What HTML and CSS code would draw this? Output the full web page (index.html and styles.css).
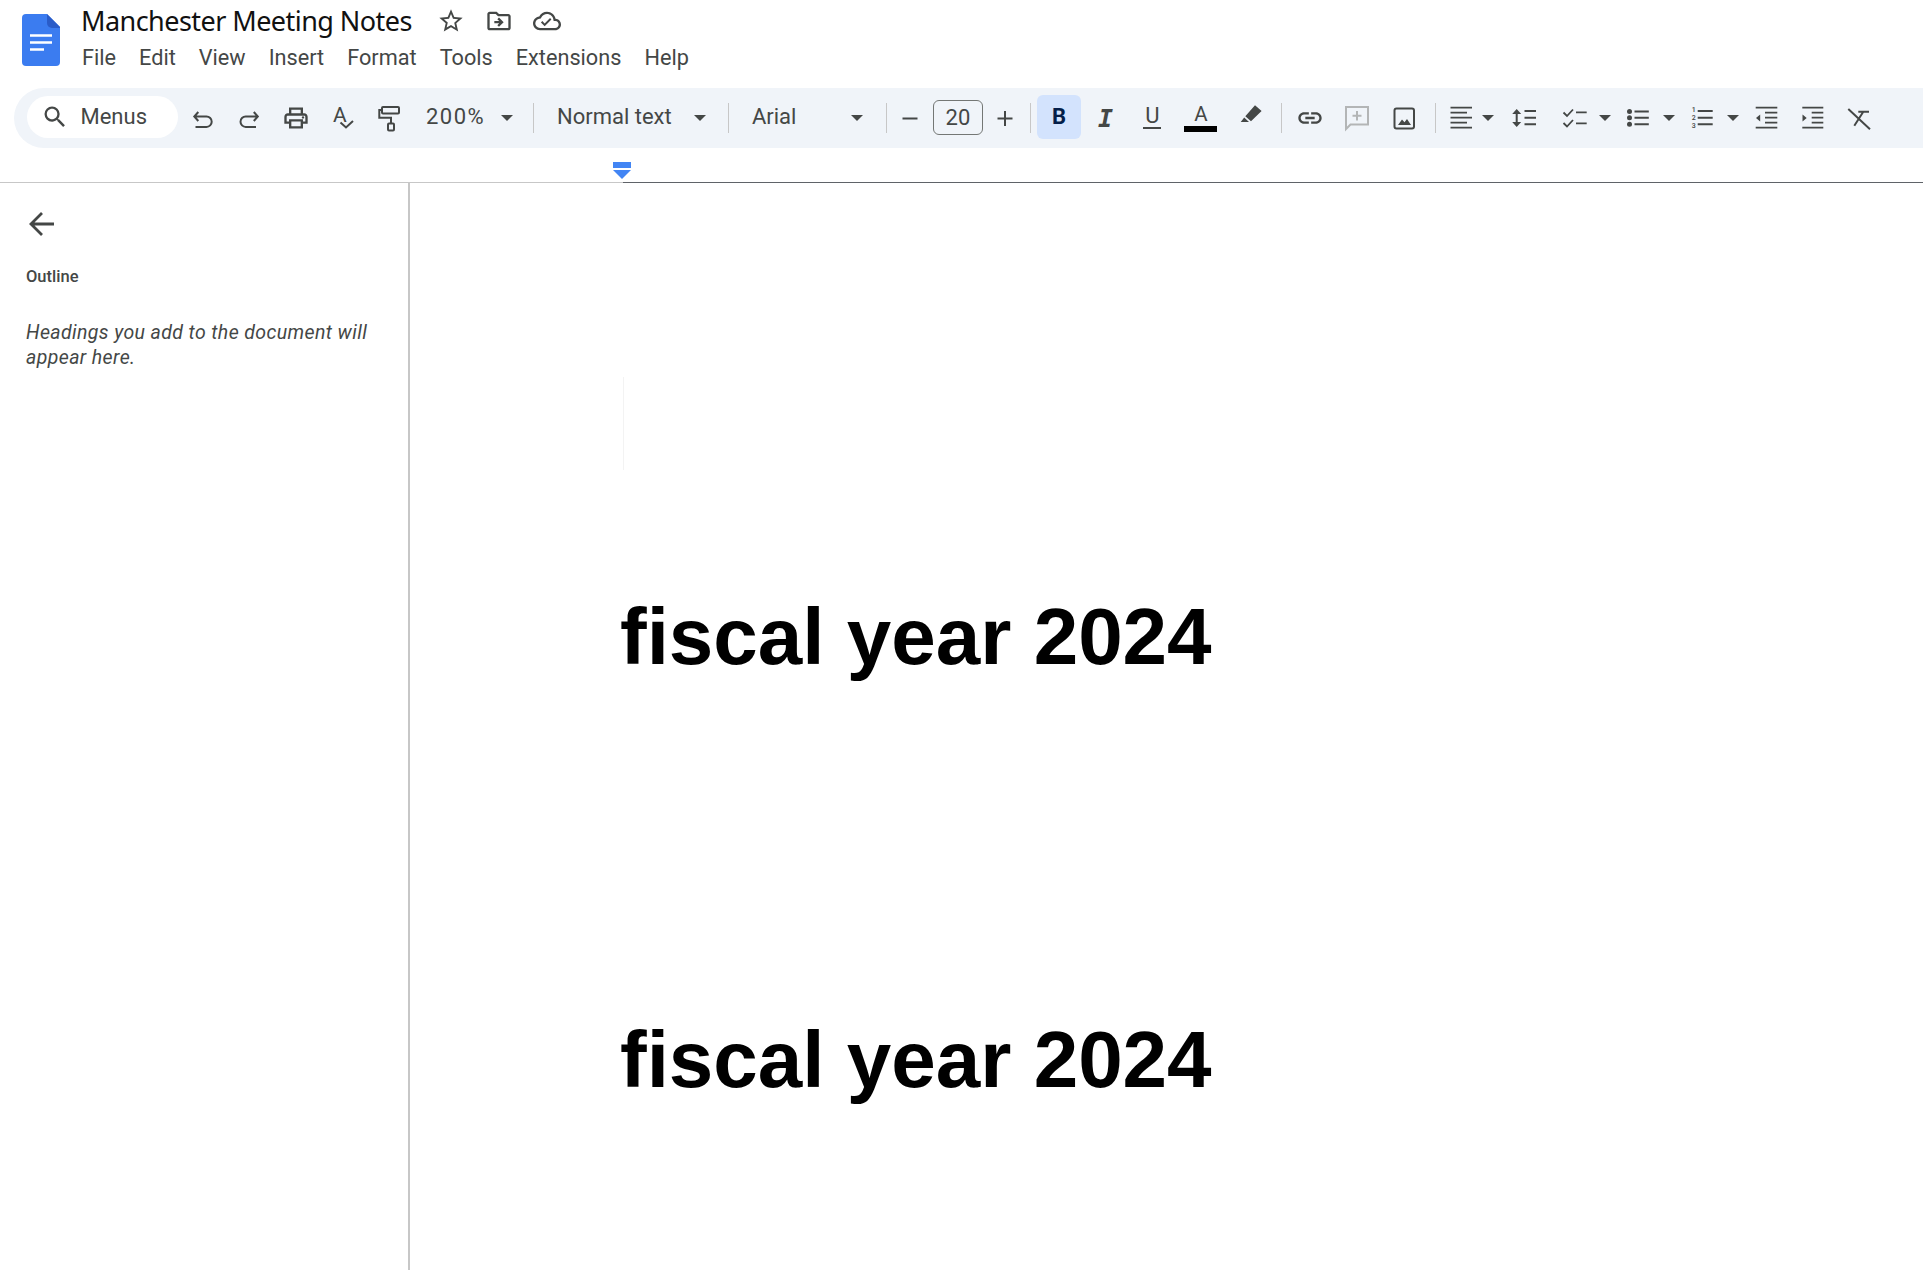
FILE: index.html
```html
<!DOCTYPE html>
<html lang="en">
<head>
<meta charset="utf-8">
<title>Manchester Meeting Notes</title>
<link rel="stylesheet" href="styles.css">
</head>
<body>
<header class="topbar">
  <svg class="logo" viewBox="0 0 38 52"><path class="logo-body" d="M4 0H25L38 13V48a4 4 0 0 1-4 4H4a4 4 0 0 1-4-4V4a4 4 0 0 1 4-4z"/><path class="logo-fold" d="M25 0L38 13V14H30a5 5 0 0 1-5-5z"/><path class="logo-lines" d="M8 21.5H30M8 28.5H30M8 35.5H22"/></svg>
  <div class="titleblock">
    <div class="titlerow">
      <h1 class="doctitle">Manchester Meeting Notes</h1>
      <svg class="icon title-star" viewBox="0 0 24 24"><path d="M22 9.24l-7.19-.62L12 2 9.19 8.63 2 9.24l5.46 4.73L5.82 21 12 17.27 18.18 21l-1.63-7.03L22 9.24zM12 15.4l-3.76 2.27 1-4.28-3.32-2.88 4.38-.38L12 6.1l1.71 4.04 4.38.38-3.32 2.88 1 4.28L12 15.4z"/></svg>
      <svg class="icon title-next" viewBox="0 0 24 24"><path d="M20 6h-8l-2-2H4c-1.1 0-1.99.9-1.99 2L2 18c0 1.1.9 2 2 2h16c1.1 0 2-.9 2-2V8c0-1.1-.9-2-2-2zm0 12H4V6h5.17l2 2H20v10zm-8.01-9l-1.41 1.41L12.16 12H8v2h4.16l-1.59 1.59L11.99 17 16 13.01 11.99 9z"/></svg>
      <svg class="icon title-next" viewBox="0 0 24 24"><path d="M12 6c2.62 0 4.88 1.86 5.39 4.43l.3 1.5 1.53.11c1.56.1 2.78 1.41 2.78 2.96 0 1.65-1.35 3-3 3H6c-2.21 0-4-1.79-4-4 0-2.05 1.53-3.76 3.56-3.97l1.07-.11.5-.95C8.08 7.14 9.94 6 12 6m0-2C9.11 4 6.6 5.64 5.35 8.04 2.34 8.36 0 10.91 0 14c0 3.31 2.69 6 6 6h13c2.76 0 5-2.24 5-5 0-2.64-2.05-4.78-4.65-4.96C18.67 6.59 15.64 4 12 4z"/><path d="M10 16.5l-3.2-3.2 1.2-1.2 2 2 4.6-4.6 1.2 1.2z"/></svg>
    </div>
    <nav class="menubar">
      <span>File</span><span>Edit</span><span>View</span><span>Insert</span><span>Format</span><span>Tools</span><span>Extensions</span><span>Help</span>
    </nav>
  </div>
</header>

<div class="toolbar">
  <div class="search">
    <svg class="icon search-icon" viewBox="0 0 24 24"><path d="M15.5 14h-.79l-.28-.27A6.471 6.471 0 0 0 16 9.5 6.5 6.5 0 1 0 9.5 16c1.61 0 3.09-.59 4.23-1.57l.27.28v.79l5 4.99L20.49 19l-4.99-5zm-6 0C7.01 14 5 11.99 5 9.5S7.01 5 9.5 5 14 7.01 14 9.5 11.99 14 9.5 14z"/></svg>
    <span>Menus</span>
  </div>
  <div class="cell"><svg class="line-icon" viewBox="0 0 28 28"><path d="M10.3 8L6.3 12.5L10.3 17M6.3 12.5H18.5a5.2 5.2 0 0 1 0 10.4H7.5"/></svg></div>
  <div class="cell"><svg class="line-icon" viewBox="0 0 28 28"><path d="M18.8 8L22.8 12.5L18.8 17M22.8 12.5H10.7a5.2 5.2 0 0 0 0 10.4H21"/></svg></div>
  <div class="cell"><svg class="icon" viewBox="0 0 24 24"><path d="M19 8h-1V3H6v5H5c-1.66 0-3 1.34-3 3v6h4v4h12v-4h4v-6c0-1.66-1.34-3-3-3zM8 5h8v3H8V5zm8 12v2H8v-4h8v2zm2-2v-2H6v2H4v-4c0-.55.45-1 1-1h14c.55 0 1 .45 1 1v4h-2z"/><circle cx="18" cy="11.5" r="1"/></svg></div>
  <div class="cell"><svg class="line-icon" viewBox="0 0 28 28"><text class="svg-letter" x="5" y="17.7">A</text><path d="M12.5 18.5L18 23.5L25 17"/></svg></div>
  <div class="cell"><svg class="line-icon" viewBox="0 0 28 28"><rect x="7" y="3" width="17" height="6.4" rx="1"/><path d="M7 6H4.3V13.7H16V19.5"/><rect x="13" y="19.5" width="6" height="7" rx="1"/></svg></div>

  <div class="select select-zoom"><span class="zoom-value">200%</span><i class="caret"></i></div>
  <div class="sep"></div>
  <div class="select select-style"><span>Normal text</span><i class="caret"></i></div>
  <div class="sep"></div>
  <div class="select select-font"><span>Arial</span><i class="caret"></i></div>
  <div class="sep"></div>

  <div class="cell cell-size-minus"><svg class="line-icon" viewBox="0 0 28 28"><path d="M6.5 14.5H21.5"/></svg></div>
  <div class="sizebox">20</div>
  <div class="cell cell-size-plus"><svg class="line-icon" viewBox="0 0 28 28"><path d="M6.5 14.5H21.5M14 7V22"/></svg></div>
  <div class="sep sep-after-size"></div>

  <div class="bold-btn">B</div>
  <div class="cell cell-italic"><span class="fmt-italic">I</span></div>
  <div class="cell cell-47"><span class="fmt-under">U</span></div>
  <div class="cell cell-wide"><span class="fmt-color"><span class="fmt-letter">A</span><i class="colorbar"></i></span></div>
  <div class="cell cell-wide"><svg class="icon" viewBox="0 0 28 28"><path d="M18 1.2L24.6 7L14 17.3L8.3 12.3zM7.2 13.5L12 18H3.7z"/></svg></div>
  <div class="sep sep-mid"></div>

  <div class="cell cell-47"><svg class="icon" viewBox="0 0 24 24"><path d="M17 7h-4v2h4c1.65 0 3 1.35 3 3s-1.35 3-3 3h-4v2h4c2.76 0 5-2.24 5-5s-2.24-5-5-5zm-6 8H7c-1.65 0-3-1.35-3-3s1.35-3 3-3h4V7H7c-2.76 0-5 2.24-5 5s2.24 5 5 5h4v-2zm-3-4h8v2H8z"/></svg></div>
  <div class="cell cell-47"><svg class="line-icon faded" viewBox="0 0 28 28"><path d="M3 3H25V20.5H7.5L3 25zM14 7V16.5M9.5 11.8H18.5"/></svg></div>
  <div class="cell cell-47"><svg class="line-icon" viewBox="0 0 28 28"><rect x="4.5" y="4.5" width="19.5" height="20" rx="2"/><path class="solid" d="M8 21L12 15.5L14.5 18.2L17 15L21 21z"/></svg></div>
  <div class="sep sep-last"></div>

  <div class="split split-tight"><svg class="line-icon thin" viewBox="0 0 28 28"><path d="M3.5 3.7H25M3.5 8.7H20M3.5 13.7H25M3.5 18.7H20M3.5 23.7H25"/></svg><i class="caret"></i></div>
  <svg class="line-icon gap-line" viewBox="0 0 28 28"><path d="M14.5 7H26M14.5 13.7H26M14.5 20.3H26M6.7 8V20"/><path class="solid" d="M2.2 10L6.7 5L11.2 10zM2.2 18L6.7 23L11.2 18z"/></svg>
  <div class="split gap-check"><svg class="line-icon thin" viewBox="0 0 28 28"><path d="M3.5 8.5L7 12L13 5.5M3.5 19L7 22.5L13 16M16 8.3H26.7M16 19.3H26.7"/></svg><i class="caret"></i></div>
  <div class="split gap-bullet"><svg class="line-icon" viewBox="0 0 28 28"><path d="M10.5 7.5H24.8M10.5 13.7H24.8M10.5 20.3H24.8"/><circle class="solid" cx="5.5" cy="7.5" r="2.5"/><circle class="solid" cx="5.5" cy="13.7" r="2.5"/><circle class="solid" cx="5.5" cy="20.3" r="2.5"/></svg><i class="caret"></i></div>
  <div class="split gap-num"><svg class="line-icon" viewBox="0 0 28 28"><path d="M9.7 7H24.7M9.7 13.7H24.7M9.7 20.3H24.7"/><text class="svg-digit" x="3.7" y="8.3">1</text><text class="svg-digit" x="3.7" y="16.3">2</text><text class="svg-digit" x="3.7" y="24.3">3</text></svg><i class="caret"></i></div>
  <svg class="line-icon thin gap-num" viewBox="0 0 28 28"><path d="M3.7 3.7H25.3M3.7 23.7H25.3M13 8.7H25.3M13 13.7H25.3M13 18.7H25.3"/><path class="solid" d="M8.2 10.5L4 14L8.2 17.5z"/></svg>
  <svg class="line-icon thin gap-indent" viewBox="0 0 28 28"><path d="M3.3 3.7H24.3M3.3 23.7H24.3M12.7 8.7H24.3M12.7 13.7H24.3M12.7 18.7H24.3"/><path class="solid" d="M3.5 10.5L7.7 14L3.5 17.5z"/></svg>
  <svg class="line-icon gap-clear" viewBox="0 0 28 28"><path d="M3.3 5L25 25.3M13.3 7.7H24M18.3 7.7L9.3 21.7"/></svg>
</div>

<div class="ruler">
  <div class="ruler-left"><i class="tab-rect"></i><i class="tab-tri"></i></div>
  <div class="ruler-right"></div>
</div>

<div class="workspace">
  <aside class="sidebar">
    <svg class="back" viewBox="0 0 26 26"><path d="M25 13H2M13 2L2 13L13 24"/></svg>
    <h2 class="outline-title">Outline</h2>
    <p class="outline-hint">Headings you add to the document will appear here.</p>
  </aside>
  <main class="page">
    <div class="margin-mark"></div>
    <p class="doc-line">fiscal year 2024</p>
    <p class="doc-line">fiscal year 2024</p>
  </main>
</div>
</body>
</html>
```
FILE: styles.css
```css
* { box-sizing: border-box; }
html, body { margin: 0; height: 100%; }
body {
  height: 1270px;
  overflow: hidden;
  background: #fff;
  color: #444746;
  font-family: Roboto, "Liberation Sans", sans-serif;
  display: flex;
  flex-direction: column;
}

/* top bar */
.topbar { display: flex; height: 88px; padding-left: 22px; flex: none; }
.logo { width: 38px; height: 52px; margin-top: 14px; flex: none; }
.logo-body { fill: #3b7cf0; }
.logo-fold { fill: #2a5cc8; }
.logo-lines { stroke: #fff; stroke-width: 2.6; fill: none; }
.titleblock { margin-left: 21px; }
.titlerow { display: flex; align-items: center; height: 41px; }
.doctitle {
  margin: 0;
  font: 400 27px/40px "Noto Sans", Roboto, sans-serif;
  letter-spacing: -0.55px;
  color: #111;
  width: 356px;
  white-space: nowrap;
}
.icon { width: 28px; height: 28px; fill: #444746; flex: none; display: block; }
.title-next { margin-left: 20px; }
.menubar { display: flex; gap: 23px; font-size: 21.7px; line-height: 34px; padding-left: 1px; color: #444746; }

/* toolbar */
.toolbar {
  display: flex;
  align-items: center;
  flex: none;
  height: 60px;
  margin-left: 14px;
  padding-left: 13px;
  background: #f0f4f9;
  border-radius: 30px 0 0 30px;
  font-size: 22px;
  line-height: 26px;
}
.search {
  width: 151px;
  height: 42px;
  margin-right: 1px;
  margin-bottom: 2px;
  border-radius: 21px;
  background: #fff;
  display: flex;
  align-items: center;
  padding-left: 14px;
  flex: none;
}
.search span { margin-left: 11.5px; }
.cell { width: 46.7px; height: 44px; display: flex; align-items: center; justify-content: center; flex: none; }
.cell-47 { width: 47px; }
.cell-wide { width: 50px; }
.cell-italic { width: 47px; margin-left: 1px; }
.cell-size-minus { width: 46px; }
.cell-size-plus { width: 44px; }
.line-icon { width: 28px; height: 28px; fill: none; stroke: #444746; stroke-width: 2; flex: none; display: block; }
.line-icon.thin { stroke-width: 1.8; }
.line-icon .solid { fill: #444746; stroke: none; }
.line-icon.faded { stroke: #b3b5b6; }
.svg-letter { font: 400 21px Roboto, sans-serif; fill: #444746; stroke: none; }
.svg-digit { font: 500 7px Roboto, sans-serif; fill: #444746; stroke: none; }
.caret {
  display: block;
  flex: none;
  width: 12px;
  height: 6px;
  border-style: solid;
  border-width: 6px 6px 0;
  border-color: #444746 transparent transparent;
}
.select { display: flex; align-items: center; justify-content: space-between; flex: none; }
.select span { position: relative; top: -1px; }
.zoom-value { letter-spacing: 1.5px; }
.select-zoom { width: 120.5px; padding: 0 19.5px 0 13.5px; }
.select-style { width: 194.5px; padding: 0 22.5px 0 23px; }
.select-font { width: 156.5px; padding: 0 22.5px; }
.sep { width: 1px; height: 30px; background: #c7c7c7; flex: none; }
.sep-after-size { margin-left: 3px; margin-right: 6px; }
.sep-mid { margin-left: 5px; margin-right: 4.5px; }
.sep-last { margin-left: 8px; margin-right: 10.5px; }
.sizebox {
  width: 50px;
  height: 35px;
  margin-bottom: 1px;
  border: 1px solid #747775;
  border-radius: 6px;
  display: flex;
  align-items: center;
  justify-content: center;
  flex: none;
}
.bold-btn {
  width: 44px;
  height: 44px;
  margin-bottom: 2px;
  border-radius: 6px;
  background: #d3e3fd;
  color: #041e49;
  font-weight: 700;
  display: flex;
  align-items: center;
  justify-content: center;
  flex: none;
}
.fmt-italic { font: italic 700 25px "DejaVu Sans Mono", monospace; }
.fmt-under { width: 18px; height: 21px; border-bottom: 2px solid #444746; line-height: 16px; text-align: center; }
.fmt-color { display: flex; flex-direction: column; align-items: center; padding-top: 3px; }
.fmt-letter { font-size: 20.5px; line-height: 15px; }
.colorbar { display: block; width: 33px; height: 6px; background: #000; margin-top: 4px; }
.split { display: flex; align-items: center; gap: 10.7px; flex: none; }
.split-tight { gap: 7px; }
.gap-line { margin-left: 16.5px; }
.gap-check { margin-left: 21.5px; }
.gap-bullet { margin-left: 13.8px; }
.gap-num { margin-left: 13px; }
.gap-indent { margin-left: 19px; }
.gap-clear { margin-left: 18px; }

/* ruler */
.ruler { display: flex; height: 35px; flex: none; }
.ruler-left { width: 623px; border-bottom: 1px solid #c7c7c7; position: relative; }
.ruler-right { flex: 1; border-bottom: 1px solid #5f6368; }
.tab-rect { position: absolute; left: 613px; top: 14px; width: 18px; height: 6px; background: #4285f4; }
.tab-tri {
  position: absolute;
  left: 613px;
  top: 22px;
  width: 18px;
  height: 9px;
  border-style: solid;
  border-width: 9px 9px 0;
  border-color: #4285f4 transparent transparent;
  z-index: 1;
}

/* body */
.workspace { display: flex; flex: 1; min-height: 0; }
.sidebar { width: 410px; flex: none; border-right: 2px solid #c7c7c7; padding: 28px 0 0 26px; }
.back { display: block; width: 26px; height: 26px; margin-left: 2.5px; fill: none; stroke: #444746; stroke-width: 2.8; }
.outline-title { margin: 30px 0 0; font-size: 16.5px; line-height: 20px; font-weight: 500; color: #444746; }
.outline-hint {
  margin: 33px 0 0;
  width: 370px;
  font-size: 19.5px;
  line-height: 25px;
  font-style: italic;
  letter-spacing: .39px;
  color: #444746;
}
.page { flex: 1; padding: 194px 0 0 210px; }
.margin-mark { width: 1px; height: 93px; margin-left: 3px; background: #f3f3f3; }
.doc-line {
  margin: 121px 0 331px;
  font: 700 80px/92px "Liberation Sans", Arial, sans-serif;
  color: #000;
  white-space: nowrap;
}
.doc-line + .doc-line { margin-top: 0; }
```
